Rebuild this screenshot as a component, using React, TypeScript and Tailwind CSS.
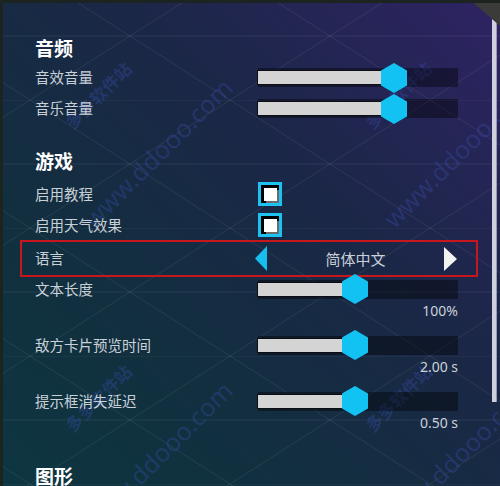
import React from "react";

const cjk = "font-['Noto_Sans_CJK_SC','Noto_Sans',sans-serif]";

function Hex() {
  return (
    <svg width="26" height="30" viewBox="0 0 26 30">
      <polygon points="13,0 26,7.5 26,22.5 13,30 0,22.5 0,7.5" fill="#12c2f3" />
    </svg>
  );
}

function Slider({ pos }: { pos: number }) {
  return (
    <div className="relative h-[19px] w-[200px] bg-black/40">
      <div
        className="absolute left-0 top-[3px] h-[13px] bg-[#d4d4d4] shadow-[0_0_0_1px_#0d0d14]"
        style={{ width: pos }}
      />
      <div className="absolute top-1/2 flex -translate-x-1/2 -translate-y-1/2" style={{ left: pos }}>
        <Hex />
      </div>
    </div>
  );
}

function Checkbox() {
  return (
    <div className="flex h-[24px] w-[24px] items-center justify-center border-[3px] border-[#1cc2f2] bg-black">
      <div className="h-[13px] w-[13px] bg-white shadow-[2px_2px_0_#6b6b6b]" />
    </div>
  );
}

function Label({ children }: { children: React.ReactNode }) {
  return <div className={`w-[223px] text-[14.5px] leading-none text-[#c9d1d8] ${cjk}`}>{children}</div>;
}

function Header({ children, className = "" }: { children: React.ReactNode; className?: string }) {
  return (
    <div className={`flex h-[28px] items-center text-[19px] font-bold leading-none text-white ${cjk} ${className}`}>
      {children}
    </div>
  );
}

function Value({ children }: { children: React.ReactNode }) {
  return (
    <div className="flex h-[20px] w-[423px] items-center justify-end text-[14px] leading-none text-[#c9d1d8] font-['Noto_Sans',sans-serif]">
      {children}
    </div>
  );
}

const marks = [
  { x: 0, y: 0 },
  { x: 300, y: 0 },
  { x: 0, y: 303 },
  { x: 300, y: 303 },
];

export default function App() {
  return (
    <div className="relative h-[486px] w-[500px] overflow-hidden border-l-[3px] border-t-[3px] border-[#1c2422] bg-[linear-gradient(to_bottom_left,#2e2363_0%,#1b2747_38%,#122f3f_70%,#0d3640_100%)]">
      {/* faint diamond grid */}
      <svg className="pointer-events-none absolute inset-0" width="500" height="486">
        <defs>
          <pattern id="grid" width="200" height="128" patternUnits="userSpaceOnUse" patternTransform="translate(27,-31)">
            <path d="M0 0H200M0 64H200M0 0L200 128M200 0L0 128" stroke="#ffffff" strokeOpacity="0.07" strokeWidth="1" fill="none" />
          </pattern>
        </defs>
        <rect width="500" height="486" fill="url(#grid)" />
      </svg>

      {/* watermark */}
      {marks.map((m, i) => (
        <React.Fragment key={i}>
          <div
            className={`pointer-events-none absolute -translate-x-1/2 -translate-y-1/2 -rotate-45 whitespace-nowrap text-[17px] font-bold text-[#3b4fb0]/35 ${cjk}`}
            style={{ left: 95 + m.x, top: 92 + m.y }}
          >
            多多软件站
          </div>
          <div
            className="pointer-events-none absolute -translate-x-1/2 -translate-y-1/2 -rotate-45 whitespace-nowrap text-[25px] text-[#3b4fb0]/35 font-['Noto_Sans',sans-serif]"
            style={{ left: 155 + m.x, top: 150 + m.y }}
          >
            www.ddooo.com
          </div>
        </React.Fragment>
      ))}

      <div className="relative flex flex-col pl-[32px] pt-[30px]">
        <Header>音频</Header>
        <div className="mt-[1px] flex h-[31px] items-center">
          <Label>音效音量</Label>
          <Slider pos={136} />
        </div>
        <div className="flex h-[31px] items-center">
          <Label>音乐音量</Label>
          <Slider pos={136} />
        </div>

        <Header className="mt-[22px]">游戏</Header>
        <div className="mt-[4px] flex h-[32px] items-center">
          <Label>启用教程</Label>
          <Checkbox />
        </div>
        <div className="flex h-[30px] items-center">
          <Label>启用天气效果</Label>
          <Checkbox />
        </div>
        <div className="-ml-[15px] flex h-[37px] w-[458px] items-center border-2 border-[#c8161d] pl-[13px]">
          <div className={`w-[220px] text-[14.5px] leading-none text-[#c9d1d8] ${cjk}`}>语言</div>
          <div className="flex w-[202px] items-center justify-between">
            <svg width="12" height="25" viewBox="0 0 12 25">
              <polygon points="12,0 12,25 0,12.5" fill="#18bdf0" />
            </svg>
            <span className={`text-[15px] leading-none text-[#c9d1d8] ${cjk}`}>简体中文</span>
            <svg width="13" height="24" viewBox="0 0 13 24">
              <polygon points="0,0 13,12 0,24" fill="#f2f2f2" />
            </svg>
          </div>
        </div>

        <div className="flex h-[24px] items-center">
          <Label>文本长度</Label>
          <Slider pos={97} />
        </div>
        <Value>100%</Value>

        <div className="mt-[12px] flex h-[24px] items-center">
          <Label>敌方卡片预览时间</Label>
          <Slider pos={97} />
        </div>
        <Value>2.00 s</Value>

        <div className="mt-[12px] flex h-[24px] items-center">
          <Label>提示框消失延迟</Label>
          <Slider pos={97} />
        </div>
        <Value>0.50 s</Value>

        <Header className="mt-[28px]">图形</Header>
      </div>

      {/* scrollbar */}
      <div className="absolute right-[3px] top-[5px] h-[394px] w-[5px] bg-[#cfd0de] shadow-[inset_-1px_0_0_#9a98b0]" />
      {/* bevelled corner */}
      <svg className="absolute right-0 top-[-3px]" width="30" height="30" viewBox="0 0 30 30">
        <polygon points="0,0 30,0 30,26" fill="#3b3c39" />
      </svg>
    </div>
  );
}
